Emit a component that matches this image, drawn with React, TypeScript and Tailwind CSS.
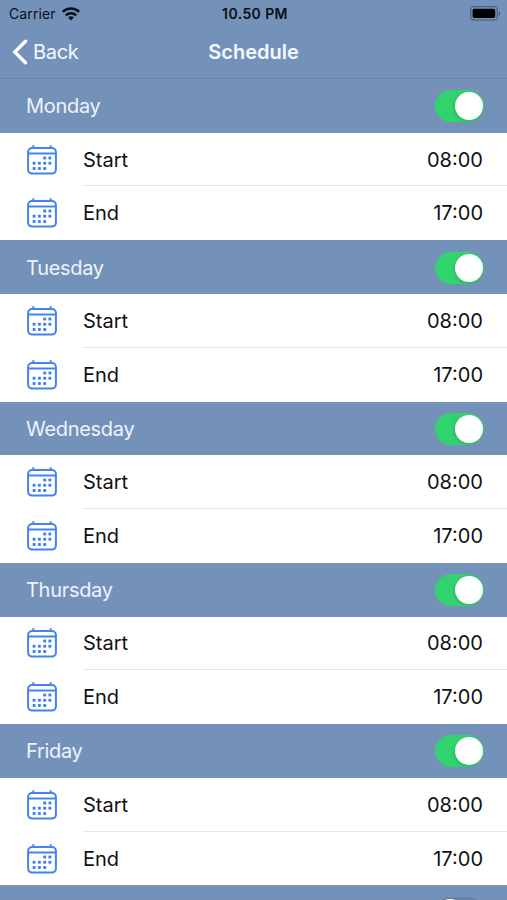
import { useState } from 'react';

type Day = {
  name: string;
  start: string;
  end: string;
  enabled: boolean;
};

const initialDays: Day[] = [
  { name: 'Monday', start: '08:00', end: '17:00', enabled: true },
  { name: 'Tuesday', start: '08:00', end: '17:00', enabled: true },
  { name: 'Wednesday', start: '08:00', end: '17:00', enabled: true },
  { name: 'Thursday', start: '08:00', end: '17:00', enabled: true },
  { name: 'Friday', start: '08:00', end: '17:00', enabled: true },
  { name: 'Saturday', start: '08:00', end: '17:00', enabled: false },
];

function WifiIcon() {
  return (
    <svg width="18" height="14" viewBox="0 0 18 14" fill="none" stroke="#0b0f16" strokeWidth="2.5">
      <path d="M.8 4.9C5.3 .5 12.7 .5 17.2 4.9" />
      <path d="M3.8 8.3c2.9-2.8 7.5-2.8 10.4 0" />
      <path d="M6.2 10.4c1.6-1.5 4-1.5 5.6 0L9 13.4z" fill="#0b0f16" stroke="none" />
    </svg>
  );
}

function BatteryIcon() {
  return (
    <svg width="31" height="15" viewBox="0 0 31 15">
      <rect x=".7" y=".7" width="26.6" height="13.4" rx="3.6" fill="none" stroke="#4f6282" strokeWidth="1.3" />
      <rect x="2.6" y="2.7" width="22.6" height="9.4" rx="1.8" fill="#000" />
      <path d="M28.6 5.2c2 .8 2 3.8 0 4.6z" fill="#4f6282" />
    </svg>
  );
}

function CalendarIcon() {
  return (
    <svg width="30" height="30" viewBox="0 0 30 30" fill="none" stroke="#4283ef" strokeWidth="2">
      <rect x="1.1" y="3" width="27.8" height="25.6" rx="4" />
      <path d="M1 8.4h28M6.3 .3v2.7M23.7 .3v2.7" />
      <g fill="#4283ef" stroke="none">
        <rect x="16.2" y="11.6" width="3" height="3" rx=".8" />
        <rect x="21.4" y="11.6" width="3" height="3" rx=".8" />
        <rect x="5.6" y="16.8" width="3" height="3" rx=".8" />
        <rect x="10.9" y="16.8" width="3" height="3" rx=".8" />
        <rect x="16.2" y="16.8" width="3" height="3" rx=".8" />
        <rect x="21.4" y="16.8" width="3" height="3" rx=".8" />
        <rect x="5.6" y="22" width="3" height="3" rx=".8" />
        <rect x="10.9" y="22" width="3" height="3" rx=".8" />
        <rect x="16.2" y="22" width="3" height="3" rx=".8" />
      </g>
    </svg>
  );
}

function Switch({ on, label, onClick }: { on: boolean; label: string; onClick: () => void }) {
  return (
    <button
      role="switch"
      aria-checked={on}
      aria-label={label}
      onClick={onClick}
      className={`flex h-8 w-[49px] items-center rounded-full px-px ${
        on ? 'justify-end bg-[#30d36d]' : 'justify-start bg-[#6682a8]'
      }`}
    >
      <span className="size-7 rounded-full bg-white shadow-[-1px_1px_3px_rgba(0,0,0,0.15)]" />
    </button>
  );
}

function TimeRow({ label, time }: { label: string; time: string }) {
  return (
    <div className="flex h-[53.8px] items-center pl-[27px]">
      <CalendarIcon />
      <div className="ml-[26px] flex h-full flex-1 items-center justify-between pr-6 text-[20px] text-[#111]">
        <span>{label}</span>
        <span>{time}</span>
      </div>
    </div>
  );
}

export default function App() {
  const [days, setDays] = useState(initialDays);

  const toggle = (name: string) => {
    setDays(days.map((day) => (day.name === name ? { ...day, enabled: !day.enabled } : day)));
  };

  return (
    <div className="flex h-[900px] w-full flex-col overflow-hidden bg-white font-['Inter','Liberation_Sans',sans-serif]">
      <header className="h-[79px] shrink-0 border-b border-[#6683ab] bg-[#7492b9]">
        <div className="grid h-[27px] grid-cols-3 items-center pl-[9px] pr-[6px] text-[14px] text-[#0b0f16]">
          <div className="flex items-center gap-[6px]">
            <span className="tracking-[0.1px]">Carrier</span>
            <WifiIcon />
          </div>
          <span className="text-center font-semibold tracking-[0.4px]">10.50 PM</span>
          <div className="flex justify-end">
            <BatteryIcon />
          </div>
        </div>
        <div className="grid h-[50px] grid-cols-3 items-center px-3 text-[20px] text-[#f4f8ff]">
          <button className="flex items-center gap-[5px] tracking-[-0.3px]">
            <svg width="16" height="26" viewBox="0 0 16 26" fill="none" stroke="#fff" strokeWidth="3.4" strokeLinecap="round">
              <path d="M13.5 2.2 2.8 13l10.7 10.8" />
            </svg>
            Back
          </button>
          <h1 className="text-center font-semibold">Schedule</h1>
        </div>
      </header>

      <main className="min-h-0 flex-1 overflow-hidden">
        {days.map((day) => (
          <section key={day.name}>
            <div className="flex h-[53.7px] items-center justify-between bg-[#7492b9] pl-[26px] pr-[23px] pt-px">
              <h2 className="text-[20px] tracking-[-0.3px] text-[#edf3fc]">{day.name}</h2>
              <Switch on={day.enabled} label={day.name} onClick={() => toggle(day.name)} />
            </div>
            {day.enabled && (
              <>
                <TimeRow label="Start" time={day.start} />
                <div className="-mt-px ml-[83px] h-px bg-[#e6e6e8]" />
                <TimeRow label="End" time={day.end} />
              </>
            )}
          </section>
        ))}
      </main>
    </div>
  );
}
